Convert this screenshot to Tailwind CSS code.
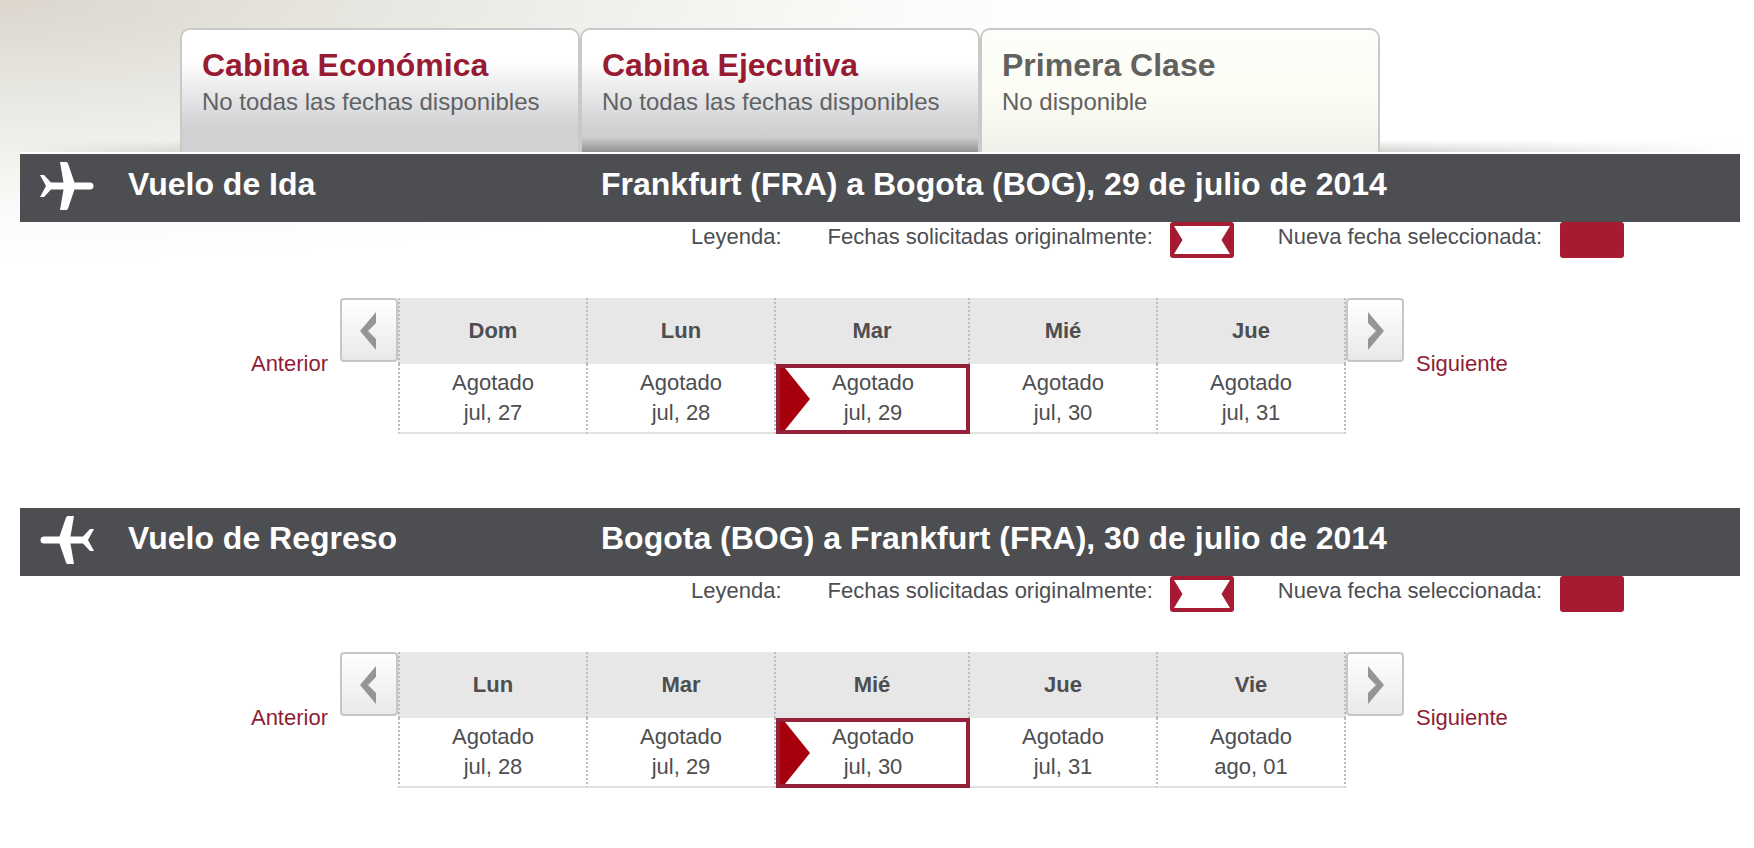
<!DOCTYPE html>
<html lang="es">
<head>
  <meta charset="UTF-8" />
  <meta name="viewport" content="width=device-width, initial-scale=1" />
  <title>Selección de fechas</title>
  <script src="https://cdn.jsdelivr.net/npm/@tailwindcss/browser@4"></script>
</head>
<body class="min-h-screen bg-white bg-[radial-gradient(ellipse_1080px_260px_at_0_0,#dcd6cd_0%,#e4e2db_25%,#efeeea_52%,#fafaf8_80%,#ffffff_100%)] bg-no-repeat font-['Liberation_Sans',Arial,sans-serif] text-[22px] leading-[30px] text-[#4d4e51]">

  <div class="pl-5 pr-[14px] pt-7">

    <!-- Cabin tabs -->
    <nav class="flex items-end border-b-2 border-white">
      <div class="h-3 w-40 bg-linear-to-b from-[#d8d7d2]/0 to-[#d8d7d2] mask-l-from-0%"></div>
      <button type="button" class="flex h-[124px] w-[400px] flex-col rounded-t-[10px] border-2 border-b-0 border-[#c9c9c9] bg-linear-to-b from-white from-25% to-[#d0d1d3] to-80% px-5 pt-[15px] text-left">
        <span class="text-[32px] leading-10 font-bold text-[#981b34]">Cabina Económica</span>
        <span class="text-2xl leading-[34px] text-[#616264]">No todas las fechas disponibles</span>
      </button>
      <button type="button" class="flex h-[124px] w-[400px] flex-col rounded-t-[10px] border-2 border-b-0 border-[#c9c9c9] bg-[linear-gradient(to_bottom,#ffffff_25%,#d0d1d3_80%,#cccdce_88%,#929292_100%)] px-5 pt-[15px] text-left">
        <span class="text-[32px] leading-10 font-bold text-[#981b34]">Cabina Ejecutiva</span>
        <span class="text-2xl leading-[34px] text-[#616264]">No todas las fechas disponibles</span>
      </button>
      <button type="button" class="flex h-[124px] w-[400px] flex-col rounded-t-[10px] border-2 border-b-0 border-[#c9c9c9] bg-linear-to-b from-[#fdfdfa] via-[#fdfdf6] to-[#f0f1ea] px-5 pt-[15px] text-left">
        <span class="text-[32px] leading-10 font-bold text-[#616160]">Primera Clase</span>
        <span class="text-2xl leading-[34px] text-[#616160]">No disponible</span>
      </button>
      <div class="h-3 flex-1 bg-linear-to-b from-[#d2d2cf]/0 to-[#d2d2cf] mask-r-from-0%"></div>
    </nav>

    <!-- Outbound flight -->
    <section>
      <header class="flex h-[68px] items-center bg-[#4d4e51] pb-1 text-[32px] leading-10 font-bold text-white">
        <svg class="ml-5 h-12 w-[54px]" viewBox="0 0 54 48" fill="#fff" aria-hidden="true">
          <path d="M20 0h6q1.500 0 2 1.500L34.500 20.500H50a3.500 3.500 0 0 1 0 7H34.500L28 46.500Q27.500 48 26 48h-6L23.500 27.500H11L4 35H0L6 24 0 13H4L11 20.500H23.500Z" />
        </svg>
        <h2 class="ml-[34px] w-[473px] pb-1">Vuelo de Ida</h2>
        <p class="pb-1">Frankfurt (FRA) a Bogota (BOG), 29 de julio de 2014</p>
      </header>

      <div class="flex h-9 justify-end pr-[116px]">
        <span class="mr-[46px]">Leyenda:</span>
        <span class="mr-[17px]">Fechas solicitadas originalmente:</span>
        <svg class="mr-11 h-9 w-16" viewBox="0 0 64 36" aria-hidden="true">
          <rect width="64" height="36" rx="3" fill="#a51c32" />
          <path d="M4 4H60L51.500 18 60 32H4L12.500 18Z" fill="#fff" />
        </svg>
        <span class="mr-[18px]">Nueva fecha seleccionada:</span>
        <span class="h-9 w-16 rounded-[3px] bg-[#a51c32]"></span>
      </div>

      <div class="mt-10 flex items-start justify-center">
        <a href="#" class="mt-[51px] mr-3 w-[78px] text-right text-[#8f1d35]">Anterior</a>
        <button type="button" aria-label="Anterior" class="flex h-16 w-[58px] items-center justify-center rounded-sm border-2 border-[#c6c6c6] bg-linear-to-b from-white to-[#e9e9e9] pt-0.5 pr-0.5">
          <svg class="h-[38px] w-4" viewBox="0 0 16 38" fill="#959595" aria-hidden="true"><path d="M16 0V11L8 19 16 27V38L0 19Z" /></svg>
        </button>
        <table class="max-w-[948px] flex-1 table-fixed border-separate border-spacing-0 text-center">
          <colgroup><col class="w-[188px]" /><col class="w-[188px]" /><col class="w-[194px]" /><col class="w-[188px]" /><col class="w-[190px]" /></colgroup>
          <thead>
            <tr class="h-[66px] bg-[#e7e7e7]">
              <th class="border-l-2 border-dotted border-[#bdbdbd]">Dom</th>
              <th class="border-l-2 border-dotted border-[#bdbdbd]">Lun</th>
              <th class="border-l-2 border-dotted border-[#bdbdbd]">Mar</th>
              <th class="border-l-2 border-dotted border-[#bdbdbd]">Mié</th>
              <th class="border-x-2 border-dotted border-[#bdbdbd]">Jue</th>
            </tr>
          </thead>
          <tbody>
            <tr class="h-[70px]">
              <td class="border-b-2 border-l-2 border-b-[#e2e2e2] border-l-[#bdbdbd] [border-left-style:dotted]">Agotado<br />jul, 27</td>
              <td class="border-b-2 border-l-2 border-b-[#e2e2e2] border-l-[#bdbdbd] [border-left-style:dotted]">Agotado<br />jul, 28</td>
              <td class="relative border-b-2 border-l-2 border-b-[#e2e2e2] border-l-[#bdbdbd] pl-0.5 [border-left-style:dotted]">
                <span class="absolute top-0 -right-0.5 -bottom-0.5 left-0 z-10 border-4 border-[#95203a]">
                  <svg class="h-full w-[30px]" viewBox="0 0 30 62" fill="#a6000c" preserveAspectRatio="none" aria-hidden="true"><path d="M0 0H5L30 31 5 62H0Z" /></svg>
                </span>
                Agotado<br />jul, 29
              </td>
              <td class="border-b-2 border-l-2 border-b-[#e2e2e2] border-l-[#bdbdbd] [border-left-style:dotted]">Agotado<br />jul, 30</td>
              <td class="border-x-2 border-b-2 border-x-[#bdbdbd] border-b-[#e2e2e2] [border-inline-style:dotted]">Agotado<br />jul, 31</td>
            </tr>
          </tbody>
        </table>
        <button type="button" aria-label="Siguiente" class="flex h-16 w-[58px] items-center justify-center rounded-sm border-2 border-[#c6c6c6] bg-linear-to-b from-white to-[#e9e9e9] pt-0.5 pl-0.5">
          <svg class="h-[38px] w-4" viewBox="0 0 16 38" fill="#959595" aria-hidden="true"><path d="M0 0V11L8 19 0 27V38L16 19Z" /></svg>
        </button>
        <a href="#" class="mt-[51px] ml-3 w-[94px] text-[#8f1d35]">Siguiente</a>
      </div>
    </section>

    <!-- Return flight -->
    <section class="mt-[74px]">
      <header class="flex h-[68px] items-center bg-[#4d4e51] pb-1 text-[32px] leading-10 font-bold text-white">
        <svg class="ml-5 h-12 w-[54px]" viewBox="0 0 54 48" fill="#fff" aria-hidden="true">
          <path d="M34 0h-6q-1.500 0-2 1.500L19.500 20.500H4a3.500 3.500 0 0 0 0 7H19.500L26 46.500Q26.500 48 28 48h6L30.500 27.500H43L50 35h4L48 24 54 13H50L43 20.500H30.500Z" />
        </svg>
        <h2 class="ml-[34px] w-[473px] pb-1">Vuelo de Regreso</h2>
        <p class="pb-1">Bogota (BOG) a Frankfurt (FRA), 30 de julio de 2014</p>
      </header>

      <div class="flex h-9 justify-end pr-[116px]">
        <span class="mr-[46px]">Leyenda:</span>
        <span class="mr-[17px]">Fechas solicitadas originalmente:</span>
        <svg class="mr-11 h-9 w-16" viewBox="0 0 64 36" aria-hidden="true">
          <rect width="64" height="36" rx="3" fill="#a51c32" />
          <path d="M4 4H60L51.500 18 60 32H4L12.500 18Z" fill="#fff" />
        </svg>
        <span class="mr-[18px]">Nueva fecha seleccionada:</span>
        <span class="h-9 w-16 rounded-[3px] bg-[#a51c32]"></span>
      </div>

      <div class="mt-10 flex items-start justify-center">
        <a href="#" class="mt-[51px] mr-3 w-[78px] text-right text-[#8f1d35]">Anterior</a>
        <button type="button" aria-label="Anterior" class="flex h-16 w-[58px] items-center justify-center rounded-sm border-2 border-[#c6c6c6] bg-linear-to-b from-white to-[#e9e9e9] pt-0.5 pr-0.5">
          <svg class="h-[38px] w-4" viewBox="0 0 16 38" fill="#959595" aria-hidden="true"><path d="M16 0V11L8 19 16 27V38L0 19Z" /></svg>
        </button>
        <table class="max-w-[948px] flex-1 table-fixed border-separate border-spacing-0 text-center">
          <colgroup><col class="w-[188px]" /><col class="w-[188px]" /><col class="w-[194px]" /><col class="w-[188px]" /><col class="w-[190px]" /></colgroup>
          <thead>
            <tr class="h-[66px] bg-[#e7e7e7]">
              <th class="border-l-2 border-dotted border-[#bdbdbd]">Lun</th>
              <th class="border-l-2 border-dotted border-[#bdbdbd]">Mar</th>
              <th class="border-l-2 border-dotted border-[#bdbdbd]">Mié</th>
              <th class="border-l-2 border-dotted border-[#bdbdbd]">Jue</th>
              <th class="border-x-2 border-dotted border-[#bdbdbd]">Vie</th>
            </tr>
          </thead>
          <tbody>
            <tr class="h-[70px]">
              <td class="border-b-2 border-l-2 border-b-[#e2e2e2] border-l-[#bdbdbd] [border-left-style:dotted]">Agotado<br />jul, 28</td>
              <td class="border-b-2 border-l-2 border-b-[#e2e2e2] border-l-[#bdbdbd] [border-left-style:dotted]">Agotado<br />jul, 29</td>
              <td class="relative border-b-2 border-l-2 border-b-[#e2e2e2] border-l-[#bdbdbd] pl-0.5 [border-left-style:dotted]">
                <span class="absolute top-0 -right-0.5 -bottom-0.5 left-0 z-10 border-4 border-[#95203a]">
                  <svg class="h-full w-[30px]" viewBox="0 0 30 62" fill="#a6000c" preserveAspectRatio="none" aria-hidden="true"><path d="M0 0H5L30 31 5 62H0Z" /></svg>
                </span>
                Agotado<br />jul, 30
              </td>
              <td class="border-b-2 border-l-2 border-b-[#e2e2e2] border-l-[#bdbdbd] [border-left-style:dotted]">Agotado<br />jul, 31</td>
              <td class="border-x-2 border-b-2 border-x-[#bdbdbd] border-b-[#e2e2e2] [border-inline-style:dotted]">Agotado<br />ago, 01</td>
            </tr>
          </tbody>
        </table>
        <button type="button" aria-label="Siguiente" class="flex h-16 w-[58px] items-center justify-center rounded-sm border-2 border-[#c6c6c6] bg-linear-to-b from-white to-[#e9e9e9] pt-0.5 pl-0.5">
          <svg class="h-[38px] w-4" viewBox="0 0 16 38" fill="#959595" aria-hidden="true"><path d="M0 0V11L8 19 0 27V38L16 19Z" /></svg>
        </button>
        <a href="#" class="mt-[51px] ml-3 w-[94px] text-[#8f1d35]">Siguiente</a>
      </div>
    </section>

  </div>
</body>
</html>
